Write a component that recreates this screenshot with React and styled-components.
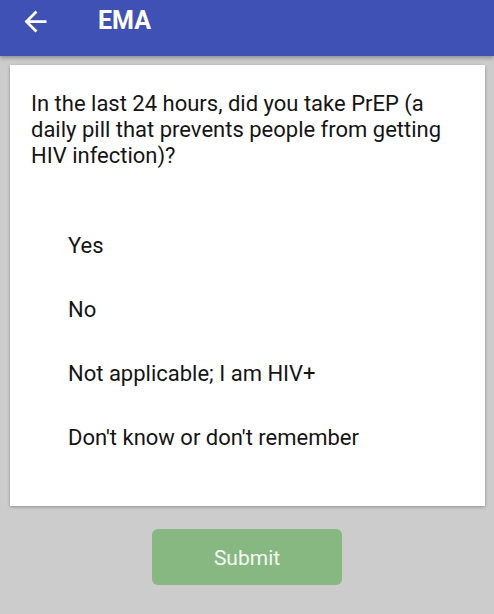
import React, { useState } from 'react';
import styled, { createGlobalStyle } from 'styled-components';

const GlobalStyle = createGlobalStyle`
    html, body {
        margin: 0;
        padding: 0;
        background: #cccccc;
        font-family: Roboto, "Noto Sans", sans-serif;
    }
`

const Page = styled.div`
    width: 494px;
    height: 614px;
    background: #cccccc;
    display: flex;
    flex-direction: column;
    overflow: hidden;
`
const Toolbar = styled.div`
    height: 56px;
    background: #3f51b5;
    box-shadow: 0 2px 4px rgba(0,0,0,0.3);
    display: flex;
    align-items: flex-start;
    padding-top: 7px;
    box-sizing: border-box;
    position: relative;
    z-index: 2;
`
const BackButton = styled.button`
    width: 33px;
    height: 28px;
    margin-left: 19px;
    padding: 0;
    border: none;
    background: none;
    display: flex;
    align-items: center;
    justify-content: center;
    cursor: pointer;
`
const Title = styled.h1`
    margin: 0 0 0 46px;
    color: white;
    font-size: 25px;
    font-weight: 700;
    line-height: 28px;
`
const Card = styled.div`
    margin: 9px 9px 0 10px;
    background: white;
    box-shadow: 0 1px 3px rgba(0,0,0,0.3);
    padding: 26px 21px 37px 21px;
`
const Question = styled.p`
    margin: 0;
    font-size: 22px;
    line-height: 26px;
    color: #151515;
`
const Options = styled.div`
    margin-top: 44px;
    display: flex;
    flex-direction: column;
`
const Option = styled.label`
    height: 64px;
    display: flex;
    align-items: center;
    padding-left: 37px;
    font-size: 22px;
    color: ${({ selected }) => (selected ? '#3f51b5' : '#151515')};
    cursor: pointer;
`
const Submit = styled.button`
    align-self: center;
    margin-top: 23px;
    width: 190px;
    height: 56px;
    border: none;
    border-radius: 6px;
    background: #88b882;
    color: #f4f8f2;
    font-family: Roboto, sans-serif;
    font-size: 21px;
    padding-top: 2px;
`

const answers = [
    'Yes',
    'No',
    'Not applicable; I am HIV+',
    "Don't know or don't remember",
]

const App = () => {
    const [answer, setAnswer] = useState(null);

    return (
        <Page>
            <GlobalStyle />
            <Toolbar>
                <BackButton aria-label="Back">
                    <svg width="33" height="33" viewBox="0 0 24 24" fill="white">
                        <path d="M20 11H7.83l5.59-5.59L12 4l-8 8 8 8 1.41-1.41L7.83 13H20v-2z" />
                    </svg>
                </BackButton>
                <Title>EMA</Title>
            </Toolbar>
            <Card>
                <Question>
                    In the last 24 hours, did you take PrEP (a daily pill that prevents people from getting HIV infection)?
                </Question>
                <Options>
                    {answers.map((a, i) => (
                        <Option key={a} selected={answer === i} onClick={() => setAnswer(i)}>{a}</Option>
                    ))}
                </Options>
            </Card>
            <Submit>Submit</Submit>
        </Page>
    )
}

export default App
